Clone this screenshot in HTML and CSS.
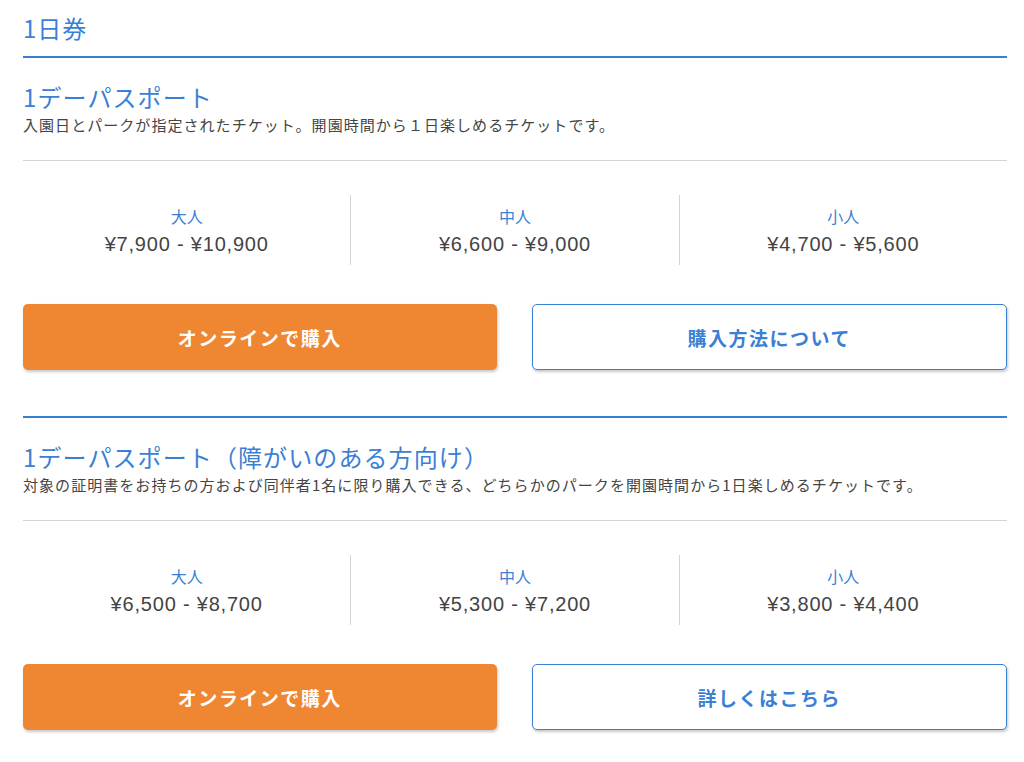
FILE: index.html
```html
<!DOCTYPE html>
<html lang="ja">
<head>
<meta charset="utf-8" />
<title>1日券</title>
<link rel="stylesheet" href="styles.css">
</head>
<body>
<div class="page">
    <h1 class="page-title">1日券</h1>

    <div class="ticket">
        <h2 class="ticket-name">1デーパスポート</h2>
        <p class="ticket-desc">入園日とパークが指定されたチケット。開園時間から１日楽しめるチケットです。</p>
        <ul class="prices">
            <li><span class="age">大人</span><span class="price">¥7,900 - ¥10,900</span></li>
            <li><span class="age">中人</span><span class="price">¥6,600 - ¥9,000</span></li>
            <li><span class="age">小人</span><span class="price">¥4,700 - ¥5,600</span></li>
        </ul>
        <div class="btns">
            <a class="btn btn-buy" href="#">オンラインで購入</a>
            <a class="btn btn-info" href="#">購入方法について</a>
        </div>
    </div>

    <div class="ticket ticket-next">
        <h2 class="ticket-name">1デーパスポート（障がいのある方向け）</h2>
        <p class="ticket-desc">対象の証明書をお持ちの方および同伴者1名に限り購入できる、どちらかのパークを開園時間から1日楽しめるチケットです。</p>
        <ul class="prices">
            <li><span class="age">大人</span><span class="price">¥6,500 - ¥8,700</span></li>
            <li><span class="age">中人</span><span class="price">¥5,300 - ¥7,200</span></li>
            <li><span class="age">小人</span><span class="price">¥3,800 - ¥4,400</span></li>
        </ul>
        <div class="btns">
            <a class="btn btn-buy" href="#">オンラインで購入</a>
            <a class="btn btn-info" href="#">詳しくはこちら</a>
        </div>
    </div>
</div>
</body>
</html>
```

FILE: styles.css
```css
*{ margin:0; padding:0; box-sizing:border-box;}
body{ background:#fff; color:#444; font-family:"Noto Sans CJK JP","Noto Sans",sans-serif;}
.page{ width:984px; margin-left:23px;}

.page-title{ font-size:24px; font-weight:normal; line-height:32px; letter-spacing:1px; color:#3b7fd4; padding-top:12px; padding-bottom:12px; border-bottom:2px solid #3b7fd4;}

.ticket{ padding-top:23px; padding-bottom:46px;}
.ticket-next{ border-top:2px solid #3b7fd4;}
.ticket-name{ font-size:24px; font-weight:normal; line-height:32px; letter-spacing:1.1px; color:#3b7fd4;}
.ticket-desc{ font-size:15px; line-height:24px; letter-spacing:1.05px; color:#444; padding-bottom:23px; border-bottom:1px solid #d4d4d4;}

.prices{ list-style:none; display:flex; margin-top:34px;}
.prices li{ flex:1; height:70px; padding-top:9px; display:flex; flex-direction:column; align-items:center; border-left:1px solid #d4d4d4;}
.prices li:first-child{ border-left:none;}
.age{ font-size:16px; line-height:24px; color:#3b7fd4;}
.price{ font-family:"Liberation Sans","Noto Sans CJK JP",sans-serif; font-size:20px; line-height:32px; letter-spacing:0.8px; color:#444;}

.btns{ display:flex; gap:35px; margin-top:39px;}
.btn{ flex:1; height:66px; display:flex; align-items:center; justify-content:center; border-radius:5px; font-size:19px; font-weight:bold; letter-spacing:1.5px; text-decoration:none; box-shadow:1px 2px 3px rgba(0,0,0,0.22);}
.btn-buy{ background:#ef8632; color:#fff;}
.btn-info{ background:#fff; color:#3b7fd4; border:1px solid #3b7fd4;}
```
